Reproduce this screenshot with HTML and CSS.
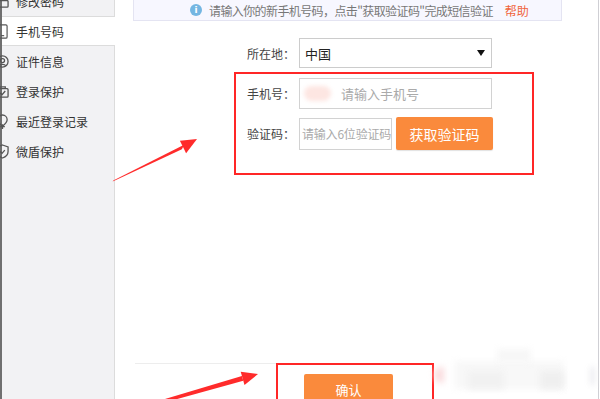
FILE: index.html
```html
<!DOCTYPE html>
<html lang="zh-CN">
<head>
  <meta charset="UTF-8" />
  <title>手机号码</title>
  <link rel="stylesheet" href="styles.css">
</head>
<body>
<div class="page">
  <aside class="side">
    <ul class="menu">
      <li>
        <svg class="ico" viewBox="0 0 14 14"><rect x="1" y="6" width="12" height="7" rx="1"/><path d="M4 6V4a3 3 0 0 1 6 0v2"/></svg>
        修改密码
      </li>
      <li class="active">
        <svg class="ico" viewBox="0 0 14 18"><rect x="1.5" y="1" width="11" height="16" rx="1.5"/><path d="M5 14h4"/></svg>
        手机号码
      </li>
      <li>
        <svg class="ico" viewBox="0 0 14 14"><circle cx="7" cy="7" r="6"/><circle cx="7" cy="6" r="2.2"/><path d="M3.5 11.5c1-2 6-2 7 0"/></svg>
        证件信息
      </li>
      <li>
        <svg class="ico" viewBox="0 0 14 14"><rect x="1" y="4" width="12" height="9" rx="1"/><path d="M4 4V2h6v2M4.5 8.5l2 2 3.5-4"/></svg>
        登录保护
      </li>
      <li>
        <svg class="ico" viewBox="0 0 14 16"><path d="M7 1a5 5 0 0 1 5 5c0 3-5 7-5 7S2 9 2 6a5 5 0 0 1 5-5z"/><path d="M7 11v5M4.5 13.5h5"/></svg>
        最近登录记录
      </li>
      <li>
        <svg class="ico" viewBox="0 0 14 16"><path d="M7 1l6 2v5c0 4-3 6-6 7-3-1-6-3-6-7V3z"/><path d="M4.5 8l2 2 3-3.5"/></svg>
        微盾保护
      </li>
    </ul>
  </aside>

  <main class="content">
    <div class="notice">
      <span class="info">i</span>
      <span class="notice-text">请输入你的新手机号码，点击"获取验证码"完成短信验证</span>
      <a class="help" href="#">帮助</a>
    </div>

    <div class="form">
      <div class="row row-area">
        <label class="label">所在地：</label>
        <div class="select">
          <span>中国</span>
          <svg class="caret" viewBox="0 0 8 6"><path d="M0 0h8L4 6z"/></svg>
        </div>
      </div>

      <div class="mark">
        <div class="row">
          <label class="label">手机号：</label>
          <div class="input input-phone">
            <span class="blur"></span>
            <span class="ph">请输入手机号</span>
          </div>
        </div>
        <div class="row row-code">
          <label class="label">验证码：</label>
          <div class="input input-code"><span class="ph">请输入6位验证码</span></div>
          <button class="btn btn-code" type="button">获取验证码</button>
        </div>
      </div>
    </div>

    <div class="foot">
      <div class="mark mark-foot">
        <button class="btn btn-ok" type="button">确认</button>
      </div>
    </div>
  </main>

  <!-- annotation arrows over the screenshot -->
  <svg class="arrows" viewBox="0 0 600 399">
    <polygon points="112.7,181.6 113.3,180.4 184.1,144.8 181.9,149.2"/>
    <polygon points="197,139 179.9,140.7 186.1,153.3"/>
    <polygon points="150.4,406.4 149.6,403.6 241.9,376.0 243.3,380.8"/>
    <polygon points="258,374 240.7,371.7 244.5,385.1"/>
  </svg>

  <div class="watermark">
    <span class="wm wm-pink"></span>
    <span class="wm wm-a"></span>
    <span class="wm wm-b"></span>
    <span class="wm wm-c"></span>
    <span class="wm wm-d"></span>
    <span class="wm wm-e"></span>
  </div>
</div>
</body>
</html>
```

FILE: styles.css
```css
* { box-sizing: border-box; margin: 0; padding: 0; }
body {
  font-family: 'Noto Sans CJK SC', 'Noto Sans', sans-serif;
  font-size: 12px;
  color: #333;
  background: #fff;
}
.page {
  position: relative;
  width: 600px;
  height: 399px;
  display: flex;
  overflow: hidden;
}

/* sidebar */
.side {
  width: 115px;
  flex-shrink: 0;
  background: #f2f2f4;
  border-left: 2px solid #707070;
  border-right: 1px solid #dcdcdc;
}
.menu {
  list-style: none;
  margin-top: -14px;
}
.menu li {
  height: 30px;
  display: flex;
  align-items: center;
  color: #333;
  white-space: nowrap;
}
.menu li.active {
  background: #fff;
  border-top: 1px solid #dcdcdc;
  border-bottom: 1px solid #dcdcdc;
  margin-right: -1px;
}
.ico {
  width: 13px;
  height: 15px;
  margin-left: -6px;
  margin-right: 7px;
  fill: none;
  stroke: #555;
  stroke-width: 1.4;
}

/* main */
.content {
  flex: 1;
  display: flex;
  flex-direction: column;
  border-right: 1px solid #cfcfd4;
  margin-right: 1px;
}
.notice {
  margin: -1px 0 0 18px;
  width: 429px;
  height: 22px;
  display: flex;
  align-items: center;
  padding-left: 56px;
  background: #f7f7ff;
  border: 1px solid #e4e4f2;
  color: #777;
}
.info {
  width: 12px;
  height: 12px;
  border-radius: 50%;
  background: #74b6e2;
  color: #fff;
  font-family: 'DejaVu Sans', sans-serif;
  font-weight: 700;
  font-size: 9px;
  line-height: 12px;
  text-align: center;
  margin-right: 7px;
}
.notice-text {
  letter-spacing: -0.6px;
}
.help {
  margin-left: 12px;
  color: #f0643c;
  text-decoration: none;
}

.form {
  margin: 17px 0 0 119px;
  width: 300px;
}
.row {
  display: flex;
  align-items: center;
}
.row-area {
  padding-left: 13px;
}
.label {
  width: 52px;
  color: #444;
}
.select {
  width: 193px;
  height: 30px;
  border: 1px solid #cccccc;
  display: flex;
  align-items: center;
  justify-content: space-between;
  padding: 0 6px 0 5px;
  color: #222;
  font-size: 13px;
}
.caret {
  width: 8px;
  height: 6px;
  fill: #111;
}

.mark {
  border: 2px solid #ff2626;
}
.form .mark {
  margin-top: 4px;
  height: 103px;
  padding: 4px 0 0 11px;
}
.input {
  position: relative;
  height: 31px;
  border: 1px solid #d2d2d2;
  display: flex;
  align-items: center;
  overflow: hidden;
  white-space: nowrap;
}
.ph {
  color: #aaa;
}
.input-phone {
  width: 193px;
  padding-left: 41px;
  font-size: 13px;
}
.blur {
  position: absolute;
  left: 4px;
  top: 7px;
  width: 27px;
  height: 15px;
  border-radius: 8px;
  background: #fde6e2;
  filter: blur(2px);
}
.row-code {
  margin-top: 8px;
}
.input-code {
  width: 93px;
  height: 32px;
  padding-left: 2px;
  letter-spacing: -0.2px;
}
.btn {
  border: none;
  background: #fa8a3c;
  color: #fff;
  font-family: inherit;
  border-radius: 2px;
}
.btn-code {
  width: 97px;
  height: 33px;
  margin-left: 4px;
  font-size: 14px;
  box-shadow: 0 1px 1px rgba(0, 0, 0, 0.12);
}

.foot {
  margin: auto 0 0 20px;
  width: 299px;
  height: 36px;
  border-top: 1px solid #ededed;
  padding-left: 141px;
}
.mark-foot {
  margin-top: -1px;
  width: 158px;
  height: 44px;
  padding: 9px 0 0 26px;
}
.btn-ok {
  width: 89px;
  height: 30px;
  font-size: 13px;
}

.arrows {
  position: absolute;
  left: 0;
  top: 0;
  width: 600px;
  height: 399px;
  fill: #ff2b2b;
  pointer-events: none;
}

/* blurred logo watermark, bottom right */
.watermark {
  position: absolute;
  left: 430px;
  top: 345px;
  width: 170px;
  height: 54px;
  pointer-events: none;
}
.wm {
  position: absolute;
  background: #f4f4f4;
  filter: blur(3px);
}
.wm-pink { left: 4px; top: 22px; width: 10px; height: 16px; border-radius: 8px 0 0 8px; background: #fadcde; }
.wm-a { left: 24px; top: 16px; width: 110px; height: 28px; background: #f8f8f8; }
.wm-b { left: 38px; top: 26px; width: 36px; height: 18px; background: #f1f1f1; }
.wm-c { left: 67px; top: 4px; width: 34px; height: 14px; background: #f7f7f7; }
.wm-d { left: 110px; top: 26px; width: 24px; height: 18px; background: #efefef; }
.wm-e { left: 160px; top: 22px; width: 5px; height: 18px; background: #ececf0; }
```
